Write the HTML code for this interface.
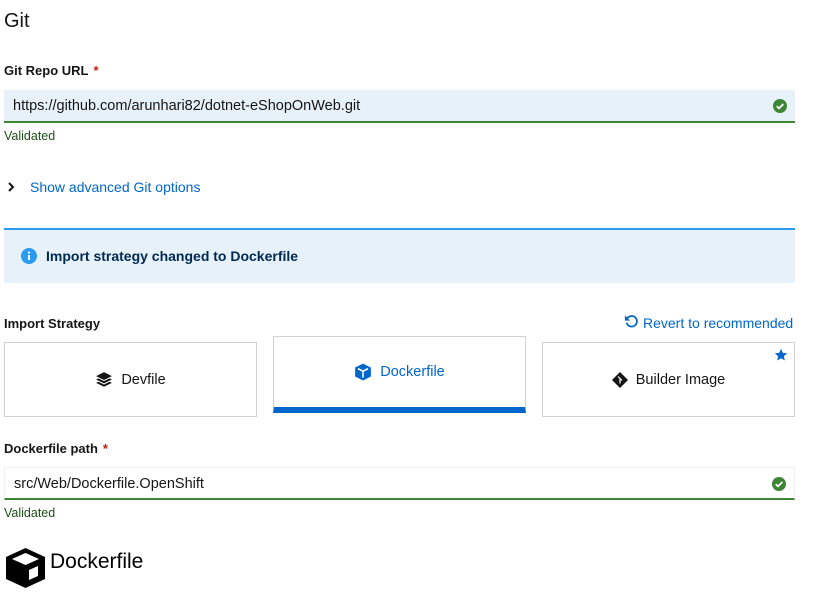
<!DOCTYPE html>
<html><head><style>
*{box-sizing:border-box;margin:0;padding:0}
body{width:839px;height:593px;background:#fff;font-family:"Liberation Sans",sans-serif;color:#151515;position:relative;overflow:hidden}
.a{position:absolute;white-space:nowrap}
.lbl{font-size:13px;font-weight:bold}
.req{color:#c9190b;margin-left:5px}
.val{font-size:12.5px;color:#1e4f18}
.inp{position:absolute;left:4px;width:791px;height:33px;border-bottom:2px solid #3e8635;font-size:14.5px;padding:8px 9px}
.card{position:absolute;border:1px solid #d2d2d2;background:#fff;display:flex;align-items:center;justify-content:center;font-size:14.5px;gap:8px}
.chk{position:absolute;right:8px;top:9px}
</style></head><body>
<div class="a" style="left:4px;top:10px;font-size:20px">Git</div>
<div class="a lbl" style="left:4px;top:63px">Git Repo URL<span class="req">*</span></div>
<div class="inp" style="top:90px;background:#e7f1fa;border-top:0">https://github.com/arunhari82/dotnet-eShopOnWeb.git
<svg class="chk" width="14" height="14" viewBox="0 0 16 16"><circle cx="8" cy="8" r="8" fill="#3e8635"/><path d="M4.3 8.2l2.5 2.5 5-5" stroke="#fff" stroke-width="2" fill="none"/></svg></div>
<div class="a val" style="left:4px;top:129px">Validated</div>
<svg class="a" style="left:7px;top:182px" width="8" height="10" viewBox="0 0 8 10"><path d="M2 1l4 4-4 4" stroke="#151515" stroke-width="2" fill="none"/></svg>
<div class="a" style="left:30px;top:179px;font-size:14px;color:#0066cc">Show advanced Git options</div>
<div class="a" style="left:4px;top:228px;width:791px;height:55px;background:#e7f1fa;border-top:2px solid #2b9af3"></div>
<svg class="a" style="left:21px;top:248px" width="16" height="16" viewBox="0 0 16 16"><circle cx="8" cy="8" r="8" fill="#2b9af3"/><rect x="7" y="7" width="2" height="5" fill="#fff"/><circle cx="8" cy="4.6" r="1.1" fill="#fff"/></svg>
<div class="a" style="left:46px;top:248px;font-size:14px;font-weight:bold;color:#002952">Import strategy changed to Dockerfile</div>
<div class="a lbl" style="left:4px;top:316px">Import Strategy</div>
<svg class="a" style="left:624px;top:314px" width="14" height="14" viewBox="0 0 16 16"><path d="M3.5 5.5A6 6 0 1 1 3 10" stroke="#0066cc" stroke-width="2" fill="none"/><path d="M1 1.5v6h6z" fill="#0066cc"/></svg>
<div class="a" style="left:643px;top:315px;font-size:14px;color:#0066cc">Revert to recommended</div>
<div class="card" style="left:4px;top:342px;width:253px;height:75px">
<svg width="18" height="18" viewBox="0 0 16 16"><path d="M8 1L1 4.5 8 8l7-3.5z M1 7.5l7 3.5 7-3.5-2-1-5 2.5-5-2.5z M1 10.5L8 14l7-3.5-2-1-5 2.5-5-2.5z" fill="#151515"/></svg>Devfile</div>
<div class="card" style="left:273px;top:336px;width:253px;height:77px;border-bottom:6px solid #0066cc;color:#0066cc;padding-bottom:0px">
<svg width="18" height="18" viewBox="0 0 16 16"><path d="M8 0.5L1 4v8l7 3.5 7-3.5V4z" fill="#0066cc"/><path d="M3.5 5L8 7.3 12.5 5 M8 7.3V13" stroke="#fff" stroke-width="1.4" fill="none"/></svg>Dockerfile</div>
<div class="card" style="left:542px;top:342px;width:253px;height:75px">
<svg width="16" height="16" viewBox="0 0 16 16"><path d="M8 0L16 8 8 16 0 8z" fill="#151515"/><path d="M6 4.5l2 2v5 M8 6.5l2 2" stroke="#fff" stroke-width="1.2" fill="none"/></svg>Builder Image
<svg style="position:absolute;right:6px;top:5px" width="14" height="14" viewBox="0 0 24 24"><path d="M12 1.5l3.1 6.9 7.4.7-5.6 5 1.7 7.4L12 17.6l-6.6 3.9 1.7-7.4-5.6-5 7.4-.7z" fill="#0066cc"/></svg></div>
<div class="a lbl" style="left:4px;top:441px">Dockerfile path<span class="req">*</span></div>
<div class="inp" style="top:467px;border:1px solid #f0f0f0;border-bottom:2px solid #3e8635">src/Web/Dockerfile.OpenShift
<svg class="chk" width="14" height="14" viewBox="0 0 16 16"><circle cx="8" cy="8" r="8" fill="#3e8635"/><path d="M4.3 8.2l2.5 2.5 5-5" stroke="#fff" stroke-width="2" fill="none"/></svg></div>
<div class="a val" style="left:4px;top:506px">Validated</div>
<svg class="a" style="left:4px;top:547px" width="43" height="42" viewBox="0 0 43 42"><path d="M21.5 1L2 10v22l19.5 9L41 32V10z" fill="#000"/><path d="M8 12l13.5 6L35 12 21.5 6z" fill="#fff"/><path d="M25 23l9-4v10l-9 4z" fill="#fff"/></svg>
<div class="a" style="left:50px;top:550px;font-size:21px;color:#000">Dockerfile</div>
</body></html>
